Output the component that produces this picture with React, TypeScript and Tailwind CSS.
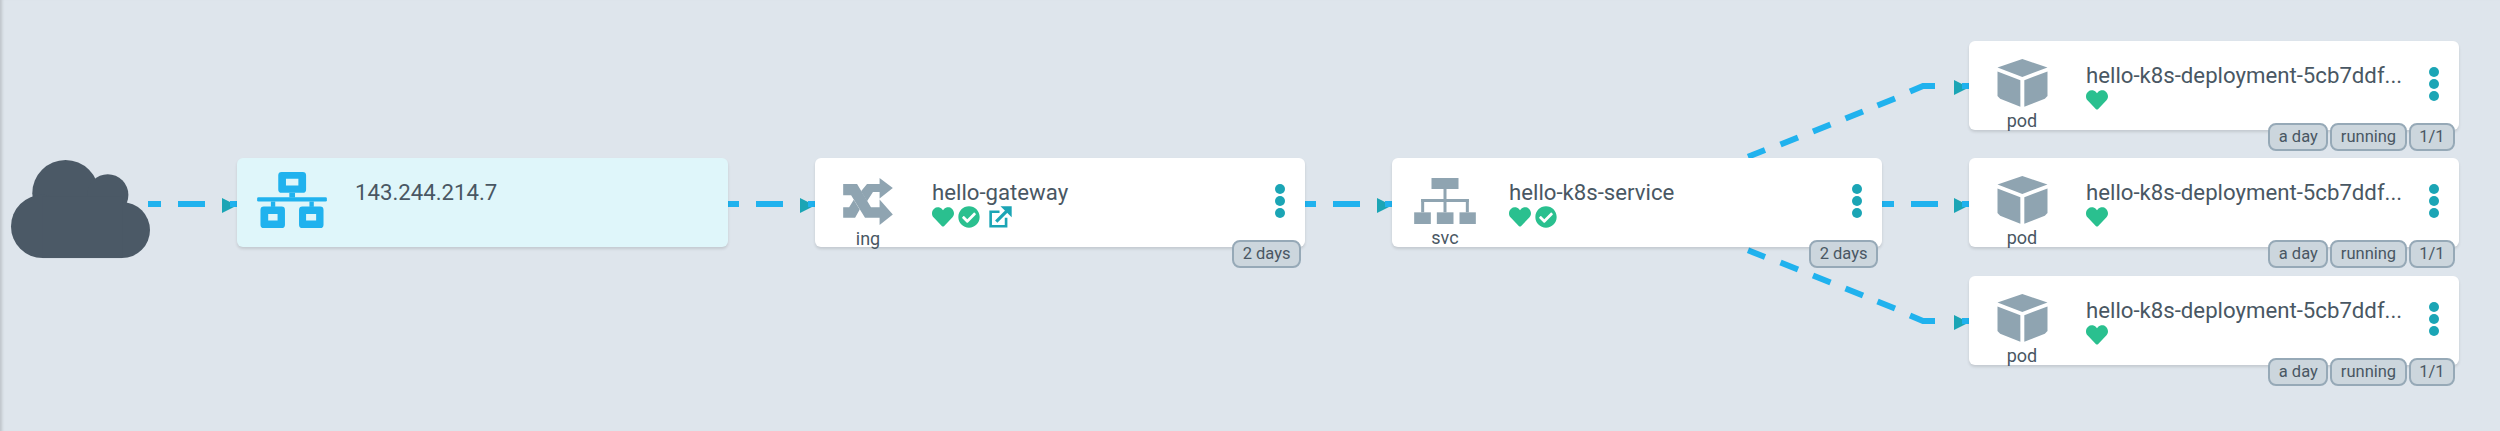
import type { ReactNode } from 'react';
import { FaCheckCircle, FaHeart } from 'react-icons/fa';

const EDGE_COLOR = '#20b2ee';
const ARROW_COLOR = '#1ba5b5';

// straight edges between columns: x of the first dash
const straightEdges = [150, 728, 1305, 1883];

// slanted dashes of the top service -> pod edge, the bottom one is mirrored
const slantDashes = [
  [1748, 156.7, 1765, 150],
  [1780.5, 144.5, 1798, 137.5],
  [1813, 131.5, 1830.5, 124.5],
  [1845.5, 118.5, 1863, 111.5],
  [1877.5, 105.5, 1895, 98.5],
];

function Edges() {
  return (
    <svg className="absolute left-0 top-0" width={2500} height={431} fill="none">
      {straightEdges.map((x) => (
        <g key={x}>
          <line x1={x - 2} x2={x + 11} y1={204} y2={204} stroke={EDGE_COLOR} strokeWidth={6} />
          <line x1={x + 28} x2={x + 55} y1={204} y2={204} stroke={EDGE_COLOR} strokeWidth={6} />
        </g>
      ))}
      {[237, 815, 1392, 1969].map((x) => (
        <Arrow key={x} x={x} y={204} />
      ))}
      <Arrow x={1969} y={86} />
      <Arrow x={1969} y={321} />
      {slantDashes.map(([x1, y1, x2, y2]) => (
        <g key={x1} stroke={EDGE_COLOR} strokeWidth={6}>
          <line x1={x1} y1={y1} x2={x2} y2={y2} />
          <line x1={x1} y1={407 - y1} x2={x2} y2={407 - y2} />
        </g>
      ))}
      <path d="M1910 91.500 L1923 86 H1935" stroke={EDGE_COLOR} strokeWidth={6} />
      <path d="M1910 315.500 L1923 321 H1935" stroke={EDGE_COLOR} strokeWidth={6} />
    </svg>
  );
}

function Arrow({ x, y }: { x: number; y: number }) {
  return (
    <g>
      <polygon points={`${x - 15},${y - 6} ${x - 15},${y + 9} ${x},${y + 1.5}`} fill={ARROW_COLOR} />
      <line x1={x - 7} x2={x} y1={y} y2={y} stroke={EDGE_COLOR} strokeWidth={6} />
    </g>
  );
}

function CloudIcon() {
  return (
    <svg viewBox="25 85 430 305" className="w-[143px] h-[102px]" fill="#4b5966">
      <circle cx={195} cy={190} r={100} />
      <circle cx={322} cy={195} r={62} />
      <circle cx={126} cy={290} r={95} />
      <circle cx={365} cy={301} r={84} />
      <rect x={126} y={200} width={239} height={185} />
    </svg>
  );
}

function NetworkIcon() {
  return (
    <svg viewBox="772 125 208 167" className="w-[70px] h-[56px]" fill="#20b2ee" fillRule="evenodd">
      <path d="M845 125h63a10 10 0 0 1 10 10v42a10 10 0 0 1-10 10h-63a10 10 0 0 1-10-10v-42a10 10 0 0 1 10-10zM858 145v20h37v-20z" />
      <rect x={868} y={187} width={17} height={14} />
      <rect x={772} y={200} width={208} height={13} rx={4} />
      <rect x={813} y={213} width={13} height={16} />
      <rect x={928} y={213} width={13} height={16} />
      <path d="M792 228h53a10 10 0 0 1 10 10v44a10 10 0 0 1-10 10h-53a10 10 0 0 1-10-10v-44a10 10 0 0 1 10-10zM805 250v20h28v-20z" />
      <path d="M907 228h53a10 10 0 0 1 10 10v44a10 10 0 0 1-10 10h-53a10 10 0 0 1-10-10v-44a10 10 0 0 1 10-10zM918 250v20h30v-20z" />
    </svg>
  );
}

function IngressIcon() {
  return (
    <svg viewBox="40 40 150 142" className="w-[50px] h-[47px]" fill="#8fa4b1">
      <polygon points="40,58 82,58 124,128 150,128 150,105 190,150 150,182 150,160 106,160 64,92 40,92" />
      <polygon points="150,40 190,70 150,102 150,82 130,82 112,110 94,80 112,58 150,58" />
      <polygon points="40,128 58,128 72,106 90,135 76,160 40,160" />
    </svg>
  );
}

function ServiceIcon() {
  return (
    <svg viewBox="45 42 185 138" className="w-[62px] h-[46px]" fill="#8fa4b1">
      <rect x={97} y={42} width={81} height={33} />
      <rect x={133} y={75} width={9} height={70} />
      <rect x={66} y={105} width={143} height={9} />
      <rect x={66} y={105} width={9} height={40} />
      <rect x={200} y={105} width={9} height={40} />
      <rect x={45} y={145} width={50} height={35} />
      <rect x={113} y={145} width={50} height={35} />
      <rect x={181} y={145} width={49} height={35} />
    </svg>
  );
}

function PodIcon() {
  return (
    <svg viewBox="52 30 151 145" className="w-[51px] h-[48px] -mt-[2px]" fill="#8fa4b1">
      <polygon points="127,30 203,56 127,84 52,56" />
      <polygon points="52,68 121,94 121,174 60,150 52,142" />
      <polygon points="203,68 133,94 133,174 195,150 203,142" />
    </svg>
  );
}

function ExternalLink() {
  return (
    <svg viewBox="475 120 70 66" className="w-[23px] h-[22px] ml-[9px]" fill="none" stroke="#1ba5b5" strokeWidth={8}>
      <path d="M507 137H480V181H527V155" />
      <path d="M497 167L532 132" strokeWidth={10} />
      <polygon points="510,120 544,120 544,154" fill="#1ba5b5" stroke="none" />
    </svg>
  );
}

function Heart() {
  return <FaHeart className="text-[#2ac08f] w-[22px] h-[22px]" />;
}

function Check() {
  return <FaCheckCircle className="text-[#2ac08f] w-[22px] h-[22px] ml-[4px]" />;
}

function Dots() {
  return (
    <div className="absolute right-[20px] top-[26px] flex flex-col gap-[2px]">
      <span className="w-[10px] h-[10px] rounded-full bg-[#1ba5b5]" />
      <span className="w-[10px] h-[10px] rounded-full bg-[#1ba5b5]" />
      <span className="w-[10px] h-[10px] rounded-full bg-[#1ba5b5]" />
    </div>
  );
}

function Badge({ children }: { children: ReactNode }) {
  return (
    <span className="h-[28px] px-[8.5px] flex items-center rounded-[8px] border-2 border-[#96a9b7] bg-[#ccd6dd] text-[16.5px] text-[#495763]">
      {children}
    </span>
  );
}

interface NodeProps {
  className: string;
  icon: ReactNode;
  kind: string;
  title: string;
  status: ReactNode;
  badges: string[];
}

function GraphNode({ className, icon, kind, title, status, badges }: NodeProps) {
  return (
    <div className={`absolute w-[490px] h-[89px] flex rounded-[6px] bg-white shadow-[0_2px_3px_rgba(0,0,0,0.12)] ${className}`}>
      <div className="w-[106px] mr-[11px] pt-[20px] flex flex-col items-center shrink-0">
        <div className="h-[48px] flex items-center justify-center">{icon}</div>
        <span className="text-[18px] leading-[20px] mt-[4px]">{kind}</span>
      </div>
      <div className="pt-[20px] w-[325px]">
        <div className="text-[22.2px] leading-[28px] whitespace-nowrap">{title}</div>
        <div className="flex items-center h-[22px]">{status}</div>
      </div>
      <Dots />
      <div className="absolute right-[4px] top-[82px] flex gap-[2px]">
        {badges.map((b) => (
          <Badge key={b}>{b}</Badge>
        ))}
      </div>
    </div>
  );
}

const podName = 'hello-k8s-deployment-5cb7ddf...';
const podBadges = ['a day', 'running', '1/1'];

export default function App() {
  return (
    <div className="relative w-[2500px] h-[431px] overflow-hidden bg-[#dee5ec] text-[#495763] font-['Roboto',sans-serif] shadow-[inset_4px_0_3px_-2px_rgba(0,0,0,0.14)]">
      <Edges />
      <div className="absolute left-[9px] top-[158px]">
        <CloudIcon />
      </div>
      <div className="absolute left-[237px] top-[158px] w-[491px] h-[89px] flex rounded-[6px] bg-[#dff6fa] shadow-[0_2px_3px_rgba(0,0,0,0.12)]">
        <div className="w-[110px] mr-[8px] pt-[14px] flex justify-center">
          <NetworkIcon />
        </div>
        <div className="pt-[20px] text-[22.2px] leading-[28px]">143.244.214.7</div>
      </div>
      <GraphNode
        className="left-[815px] top-[158px]"
        icon={<IngressIcon />}
        kind="ing"
        title="hello-gateway"
        status={
          <>
            <Heart />
            <Check />
            <ExternalLink />
          </>
        }
        badges={['2 days']}
      />
      <GraphNode
        className="left-[1392px] top-[158px]"
        icon={<ServiceIcon />}
        kind="svc"
        title="hello-k8s-service"
        status={
          <>
            <Heart />
            <Check />
          </>
        }
        badges={['2 days']}
      />
      <GraphNode className="left-[1969px] top-[41px]" icon={<PodIcon />} kind="pod" title={podName} status={<Heart />} badges={podBadges} />
      <GraphNode className="left-[1969px] top-[158px]" icon={<PodIcon />} kind="pod" title={podName} status={<Heart />} badges={podBadges} />
      <GraphNode className="left-[1969px] top-[276px]" icon={<PodIcon />} kind="pod" title={podName} status={<Heart />} badges={podBadges} />
    </div>
  );
}
